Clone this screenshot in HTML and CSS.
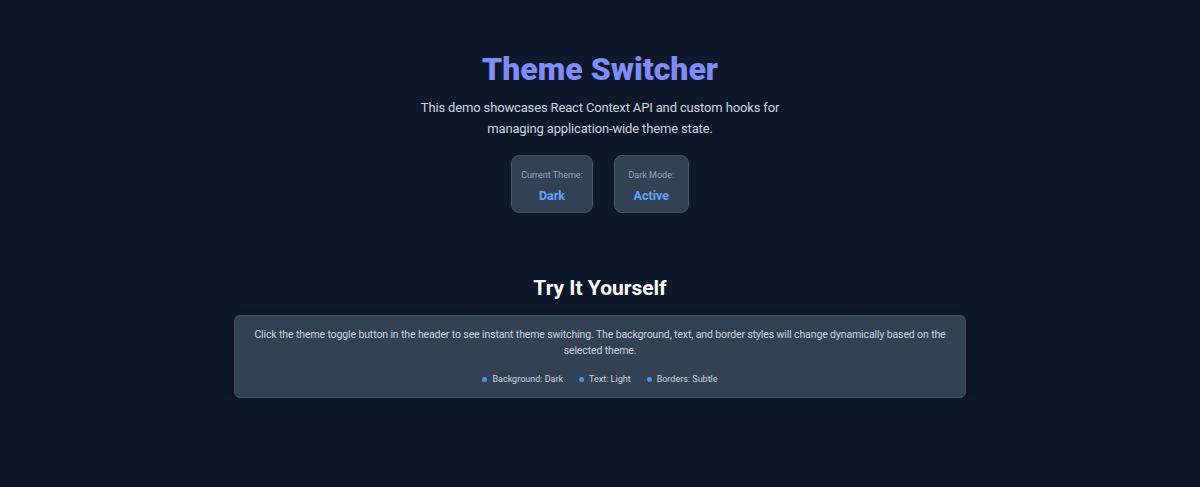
FILE: index.html
```html
<!DOCTYPE html>
<html lang="en">
<head>
    <meta charset="UTF-8">
    <meta name="viewport" content="width=device-width, initial-scale=1.0">
    <title>Theme Switcher</title>
    <link rel="stylesheet" href="styles.css">
</head>
<body>
    <main class="page">
        <!-- Intro -->
        <section class="intro">
            <h1>Theme Switcher</h1>
            <p class="lead">This demo showcases React Context API and custom hooks for managing application-wide theme state.</p>
            <div class="stats">
                <div class="stat">
                    <span class="stat-label">Current Theme:</span>
                    <span class="stat-value">Dark</span>
                </div>
                <div class="stat">
                    <span class="stat-label">Dark Mode:</span>
                    <span class="stat-value">Active</span>
                </div>
            </div>
        </section>

        <!-- Try it -->
        <section class="try">
            <h2>Try It Yourself</h2>
            <div class="try-card">
                <p>Click the theme toggle button in the header to see instant theme switching. The background, text, and border styles will change dynamically based on the selected theme.</p>
                <ul class="chips">
                    <li>Background: Dark</li>
                    <li>Text: Light</li>
                    <li>Borders: Subtle</li>
                </ul>
            </div>
        </section>
    </main>
</body>
</html>
```

FILE: styles.css
```css
body {
    font-family: Roboto, "Noto Sans", sans-serif;
    background-color: #0f172a;
    color: #cbd5e1;
    margin: 0;
    padding: 0;
}
.page {
    display: flex;
    flex-direction: column;
    align-items: center;
    padding-top: 49px;
}
.intro {
    display: flex;
    flex-direction: column;
    align-items: center;
    text-align: center;
}
.intro h1 {
    margin: 0;
    font-size: 32px;
    line-height: 40px;
    font-weight: 900;
    color: #7f8cf8;
}
.lead {
    width: 380px;
    margin: 8px 0 0;
    font-size: 13px;
    line-height: 21px;
    letter-spacing: -0.15px;
    color: #cbd5e1;
}
.stats {
    display: flex;
    gap: 21px;
    margin-top: 16px;
}
.stat {
    display: flex;
    flex-direction: column;
    align-items: center;
    gap: 7px;
    min-width: 75px;
    height: 58px;
    box-sizing: border-box;
    padding: 13px 9px 0;
    background-color: #334155;
    border: 1px solid #475569;
    border-radius: 8px;
}
.stat-label {
    font-size: 9px;
    line-height: 12px;
    color: #94a3b8;
}
.stat-value {
    font-size: 12.5px;
    line-height: 16px;
    font-weight: 700;
    color: #60a5fa;
}
.try {
    display: flex;
    flex-direction: column;
    align-items: center;
    margin-top: 61px;
}
.try h2 {
    margin: 0;
    font-size: 21px;
    line-height: 28px;
    font-weight: 700;
    color: #ffffff;
}
.try-card {
    width: 732px;
    box-sizing: border-box;
    margin-top: 13px;
    padding: 11px 14px 12px;
    background-color: #334155;
    border: 1px solid #475569;
    border-radius: 6px;
    box-shadow: 0 4px 10px rgba(0, 0, 0, 0.25);
    text-align: center;
}
.try-card p {
    margin: 0;
    font-size: 10.5px;
    line-height: 16px;
    letter-spacing: -0.12px;
    color: #cbd5e1;
}
.chips {
    list-style: none;
    display: flex;
    justify-content: center;
    gap: 16px;
    margin: 14px 0 0;
    padding: 0;
    font-size: 9px;
    line-height: 12px;
    color: #cbd5e1;
}
.chips li {
    display: flex;
    align-items: center;
    gap: 5px;
}
.chips li::before {
    content: "";
    width: 5px;
    height: 5px;
    border-radius: 50%;
    background-color: #4f8fdc;
}
```
